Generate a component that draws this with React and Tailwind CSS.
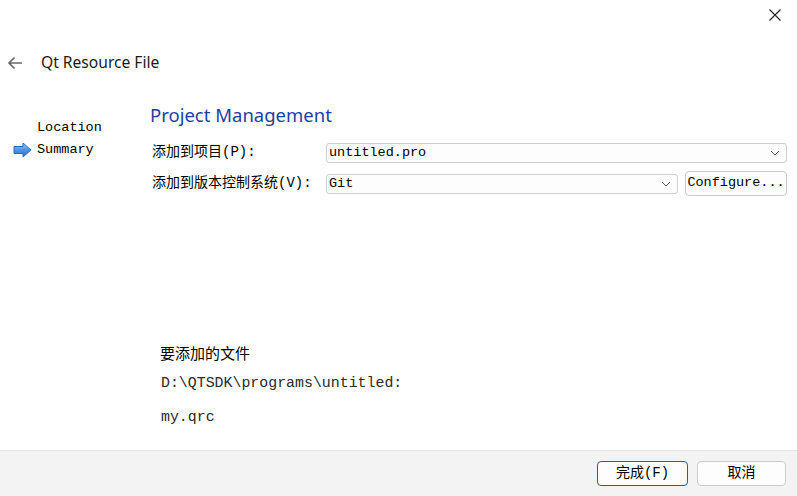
import React from "react";

const mono = { fontFamily: '"Liberation Mono", "Noto Sans CJK SC", monospace' };

function Chevron() {
  return (
    <svg width="10" height="6" viewBox="0 0 10 6" className="shrink-0">
      <path d="M1 1 L5 5 L9 1" fill="none" stroke="#555" strokeWidth="1" />
    </svg>
  );
}

function Combo({ value, className }) {
  return (
    <div
      className={
        "h-[20px] border border-[#cfcfcf] rounded-[3px] bg-[#fdfdfd] flex items-center justify-between pl-[2px] pr-[6px] text-[13.5px] text-black " +
        className
      }
      style={mono}
    >
      <span className="leading-none">{value}</span>
      <Chevron />
    </div>
  );
}

export default function App() {
  return (
    <div
      className="w-[797px] h-[496px] bg-white flex flex-col overflow-hidden"
      style={{ fontFamily: '"Noto Sans", "Noto Sans CJK SC", sans-serif' }}
    >
      {/* title bar */}
      <div className="h-[48px] flex justify-end items-start pt-[9px] pr-[16px]">
        <svg width="12" height="12" viewBox="0 0 12 12">
          <path d="M0.5 0.5 L11.5 11.5 M11.5 0.5 L0.5 11.5" stroke="#222" strokeWidth="1.1" />
        </svg>
      </div>
      {/* header */}
      <div className="h-[30px] flex items-center">
        <svg width="16" height="14" viewBox="0 0 16 14" className="ml-[7px]">
          <path d="M15 7 H2 M7.5 1.5 L2 7 L7.5 12.5" fill="none" stroke="#666" strokeWidth="1.6" />
        </svg>
        <span className="ml-[18px] text-[15.6px] text-[#1a1a1a]">Qt Resource File</span>
      </div>
      {/* body */}
      <div className="flex flex-1">
        <div className="w-[150px] pt-[39px]" style={mono}>
          <div className="h-[22px] flex items-center pl-[37px] text-[13.5px] text-black">Location</div>
          <div className="h-[22px] flex items-center text-[13.5px] text-black">
            <svg width="20" height="16" viewBox="0 0 20 16" className="ml-[13px] mr-[4px]">
              <defs>
                <linearGradient id="ag" x1="0" y1="0" x2="0" y2="1">
                  <stop offset="0" stopColor="#9cc8f4" />
                  <stop offset="0.5" stopColor="#4d94e4" />
                  <stop offset="1" stopColor="#2a6fcc" />
                </linearGradient>
              </defs>
              <path d="M1 4.5 H10 V1 L18 8 L10 15 V11.5 H1 Z" fill="url(#ag)" stroke="#2d68b8" strokeWidth="1" />
            </svg>
            <span>Summary</span>
          </div>
        </div>
        <div className="flex-1 flex flex-col pr-[10px]">
          <div className="mt-[23px] h-[28px] flex items-center text-[18.5px] text-[#1f3ea3]">Project Management</div>
          <div className="mt-[11px] h-[25px] flex items-center">
            <div className="w-[176px] pl-[2px] text-[14px] text-black" style={mono}>添加到项目(P):</div>
            <Combo value="untitled.pro" className="flex-1" />
          </div>
          <div className="mt-[6px] h-[25px] flex items-center">
            <div className="w-[176px] pl-[2px] text-[14px] text-black whitespace-nowrap" style={mono}>添加到版本控制系统(V):</div>
            <Combo value="Git" className="flex-1" />
            <div
              className="ml-[7px] w-[102px] h-[25px] border border-[#c8c8c8] rounded-[4px] bg-[#fdfdfd] flex items-center justify-center text-[13.5px] text-black"
              style={mono}
            >
              Configure...
            </div>
          </div>
          <div className="mt-[147px] ml-[10px] h-[20px] flex items-center text-[15px] text-black" style={{ fontFamily: '"Noto Sans CJK SC", sans-serif' }}>
            要添加的文件
          </div>
          <div className="mt-[10px] ml-[11px] h-[20px] flex items-center text-[14.9px] text-[#2a2a2a]" style={mono}>
            D:\QTSDK\programs\untitled:
          </div>
          <div className="mt-[14px] ml-[11px] h-[20px] flex items-center text-[14.9px] text-[#2a2a2a]" style={mono}>
            my.qrc
          </div>
        </div>
      </div>
      {/* bottom bar */}
      <div className="h-[46px] border-t border-[#e3e3e3] bg-[#f3f3f3] flex items-center justify-end pr-[11px] gap-[9px]">
        <div
          className="w-[91px] h-[25px] border border-[#0067c0] rounded-[4px] bg-[#fdfdfd] flex items-center justify-center text-[14px] text-black"
          style={mono}
        >
          完成(F)
        </div>
        <div
          className="w-[89px] h-[25px] border border-[#cccccc] rounded-[4px] bg-[#fdfdfd] flex items-center justify-center text-[14px] text-black"
          style={mono}
        >
          取消
        </div>
      </div>
    </div>
  );
}
